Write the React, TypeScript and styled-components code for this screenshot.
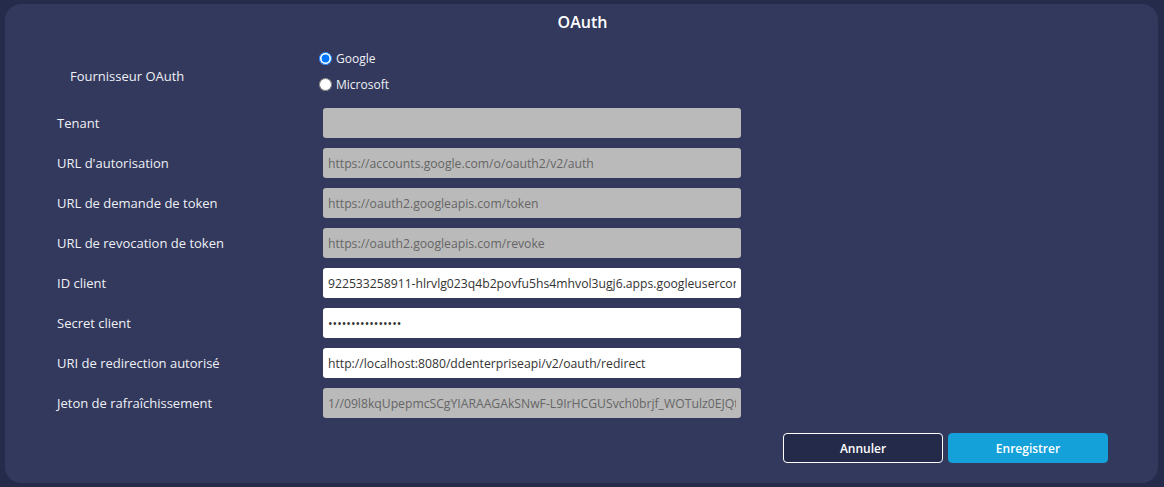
import styled, { createGlobalStyle } from "styled-components";

const GlobalStyle = createGlobalStyle`
  html, body {
    margin: 0;
    padding: 0;
    background: #252b4b;
    font-family: "Open Sans", "Liberation Sans", sans-serif;
  }
`;

const Page = styled.div`
  padding: 4px 6px 4px 5px;
  height: 487px;
  box-sizing: border-box;
`;

const Panel = styled.div`
  background: #33395c;
  border-radius: 16px;
  height: 100%;
  box-sizing: border-box;
  padding: 5px 50px 20px 52px;
  display: flex;
  flex-direction: column;
`;

const Title = styled.h2`
  margin: 0;
  font-size: 16px;
  font-weight: 600;
  line-height: 26px;
  color: #ffffff;
  text-align: center;
`;

const Form = styled.div`
  display: grid;
  grid-template-columns: 266px 418px;
  row-gap: 10px;
  margin-top: 10px;
  align-items: center;
`;

const Label = styled.label<{ $indent?: boolean }>`
  font-size: 13px;
  color: #eef0f6;
  padding-left: ${(p) => (p.$indent ? "13px" : "0")};
  padding-top: ${(p) => (p.$indent ? "8px" : "0")};
`;

const RadioGroup = styled.div`
  display: flex;
  flex-direction: column;
  margin-left: -4px;
  margin-bottom: 1px;
`;

const RadioOption = styled.label`
  display: flex;
  align-items: center;
  height: 26px;
  font-size: 12px;
  color: #eef0f6;
  cursor: pointer;

  input {
    margin: 0 4px 0 0;
    width: 13px;
    height: 13px;
  }
`;

const Field = styled.input<{ $locked?: boolean }>`
  box-sizing: border-box;
  width: 100%;
  height: 30px;
  border: none;
  border-radius: 3px;
  padding: 0 5px;
  font-family: inherit;
  font-size: 12.2px;
  background: ${(p) => (p.$locked ? "#bababa" : "#ffffff")};
  color: ${(p) => (p.$locked ? "#666666" : "#333333")};
  outline: none;
`;

const Actions = styled.div`
  display: flex;
  justify-content: flex-end;
  gap: 5px;
  margin-top: 15px;
`;

const Button = styled.button<{ $primary?: boolean }>`
  width: 160px;
  height: 30px;
  border-radius: 4px;
  font-family: inherit;
  font-size: 12px;
  font-weight: 600;
  color: #ffffff;
  cursor: pointer;
  background: ${(p) => (p.$primary ? "#14a1da" : "#232a4a")};
  border: 1px solid ${(p) => (p.$primary ? "#14a1da" : "#ffffff")};
`;

type Row = { label: string; value: string; locked?: boolean; secret?: boolean };

const rows: Row[] = [
  { label: "Tenant", value: "", locked: true },
  { label: "URL d'autorisation", value: "https://accounts.google.com/o/oauth2/v2/auth", locked: true },
  { label: "URL de demande de token", value: "https://oauth2.googleapis.com/token", locked: true },
  { label: "URL de revocation de token", value: "https://oauth2.googleapis.com/revoke", locked: true },
  { label: "ID client", value: "922533258911-hlrvlg023q4b2povfu5hs4mhvol3ugj6.apps.googleusercontent.com" },
  { label: "Secret client", value: "xxxxxxxxxxxxxxxx", secret: true },
  { label: "URI de redirection autorisé", value: "http://localhost:8080/ddenterpriseapi/v2/oauth/redirect" },
  {
    label: "Jeton de rafraîchissement",
    value: "1//09l8kqUpepmcSCgYIARAAGAkSNwF-L9IrHCGUSvch0brjf_WOTulz0EJQtwAbCdEf",
    locked: true,
  },
];

export default function App() {
  return (
    <>
      <GlobalStyle />
      <Page>
        <Panel>
          <Title>OAuth</Title>
          <Form>
            <Label $indent>Fournisseur OAuth</Label>
            <RadioGroup>
              <RadioOption>
                <input type="radio" name="provider" defaultChecked />
                Google
              </RadioOption>
              <RadioOption>
                <input type="radio" name="provider" />
                Microsoft
              </RadioOption>
            </RadioGroup>
            {rows.map((r) => (
              <>
                <Label key={r.label + "-l"}>{r.label}</Label>
                <Field
                  key={r.label + "-f"}
                  $locked={r.locked}
                  readOnly={r.locked}
                  type={r.secret ? "password" : "text"}
                  defaultValue={r.value}
                />
              </>
            ))}
          </Form>
          <Actions>
            <Button>Annuler</Button>
            <Button $primary>Enregistrer</Button>
          </Actions>
        </Panel>
      </Page>
    </>
  );
}
